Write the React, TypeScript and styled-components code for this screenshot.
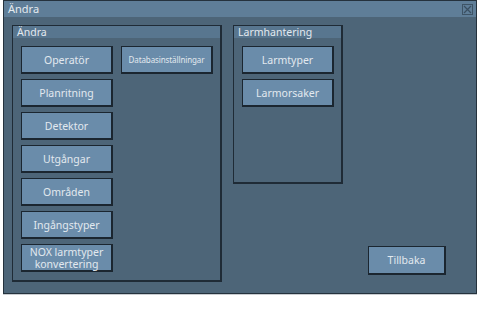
import React from "react";
import styled, { createGlobalStyle } from "styled-components";

const Global = createGlobalStyle`
  html, body { margin: 0; padding: 0; background: #ffffff; }
  body { font-family: "Noto Sans", "Open Sans", sans-serif; }
`;

const Page = styled.div`
  width: 500px;
  height: 316px;
  padding: 0 0 0 3px;
  box-sizing: border-box;
`;

const Window = styled.div`
  width: 474px;
  height: 294px;
  box-sizing: border-box;
  background: #4d6578;
  border: 1px solid #25323d;
  box-shadow: 0 1px 0 #c9cdd1;
  display: flex;
  flex-direction: column;
`;

const TitleBar = styled.div`
  height: 16px;
  background: #5f7e98;
  display: flex;
  align-items: center;
  justify-content: space-between;
  padding: 0 3px 0 4px;
  color: #e4eaef;
  font-size: 11px;
  line-height: 16px;
`;

const CloseBox = styled.div`
  width: 11px;
  height: 11px;
  box-sizing: border-box;
  border: 1px solid #3e5466;
  display: flex;
  align-items: center;
  justify-content: center;
`;

const Body = styled.div`
  flex: 1;
  display: flex;
  padding: 8px 30px 10px 8px;
  gap: 11px;
`;

const Group = styled.div<{ $w: number; $h?: number }>`
  width: ${p => p.$w}px;
  height: ${p => (p.$h ? `${p.$h}px` : "auto")};
  align-self: flex-start;
  box-sizing: border-box;
  border: 1px solid #1f2b36;
  border-right-width: 2px;
  border-bottom-width: 2px;
  display: flex;
  flex-direction: column;
`;

const GroupHeader = styled.div`
  height: 12px;
  background: #58768f;
  color: #e4eaef;
  font-size: 10.5px;
  line-height: 12px;
  padding-left: 4px;
`;

const Grid = styled.div<{ $cols: number }>`
  display: grid;
  grid-template-columns: repeat(${p => p.$cols}, 92px);
  grid-auto-rows: 28px;
  column-gap: 8px;
  row-gap: 5px;
  padding: 8px 0 8px 8px;
`;

const Button = styled.button<{ $small?: boolean }>`
  box-sizing: border-box;
  margin: 0;
  padding: 0 1px;
  background: #6a8caa;
  border: 1px solid #1b2630;
  border-right-width: 2px;
  border-bottom-width: 2px;
  color: #e2e9ef;
  font-family: "Noto Sans", "Open Sans", sans-serif;
  font-size: ${p => (p.$small ? "8px" : "10.5px")};
  line-height: 12px;
  text-align: center;
  white-space: ${p => (p.$small ? "nowrap" : "normal")};
  letter-spacing: ${p => (p.$small ? "-0.1px" : "0")};
  cursor: pointer;
`;

const Aside = styled.div`
  flex: 1;
  display: flex;
  justify-content: flex-end;
  align-items: flex-end;
  padding-bottom: 8px;
`;

const BackButton = styled(Button)`
  width: 78px;
  height: 29px;
`;

const left = [
  ["Operatör", "Databasinställningar"],
  ["Planritning"],
  ["Detektor"],
  ["Utgångar"],
  ["Områden"],
  ["Ingångstyper"],
  ["NOX larmtyper konvertering"],
];

export default function App() {
  return (
    <Page>
      <Global />
      <Window>
        <TitleBar>
          <span>Ändra</span>
          <CloseBox>
            <svg width="9" height="9" viewBox="0 0 9 9">
              <path d="M1 1L8 8M8 1L1 8" stroke="#3a4f61" strokeWidth="1.2" />
            </svg>
          </CloseBox>
        </TitleBar>
        <Body>
          <Group $w={210}>
            <GroupHeader>Ändra</GroupHeader>
            <Grid $cols={2}>
              {left.map((row, i) => (
                <React.Fragment key={i}>
                  <Button>{row[0]}</Button>
                  {row[1] ? <Button $small>{row[1]}</Button> : <span />}
                </React.Fragment>
              ))}
            </Grid>
          </Group>
          <Group $w={110} $h={159}>
            <GroupHeader>Larmhantering</GroupHeader>
            <Grid $cols={1}>
              <Button>Larmtyper</Button>
              <Button>Larmorsaker</Button>
            </Grid>
          </Group>
          <Aside>
            <BackButton>Tillbaka</BackButton>
          </Aside>
        </Body>
      </Window>
    </Page>
  );
}
